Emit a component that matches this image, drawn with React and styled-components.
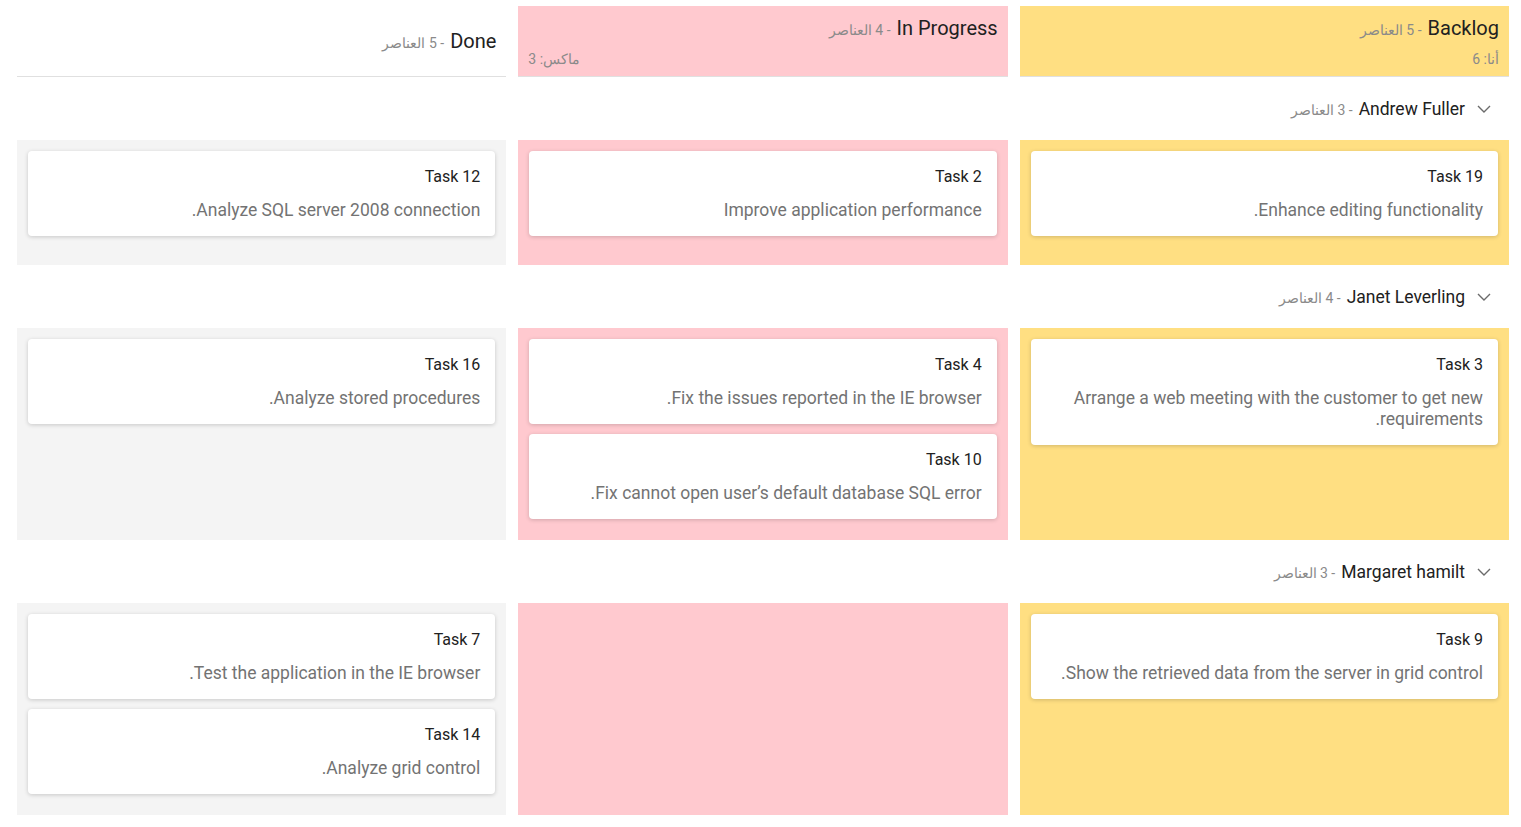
import React from 'react';
import styled, { createGlobalStyle } from 'styled-components';

const GlobalStyle = createGlobalStyle`
  body {
    margin: 0;
    background: #fff;
    font-family: Roboto, "Noto Sans", "Liberation Sans", sans-serif;
  }
`;

const columns = [
  { key: 'backlog', title: 'Backlog', count: 5, min: 'أنا: 6', max: '', bg: '#ffdf82' },
  { key: 'progress', title: 'In Progress', count: 4, min: '', max: 'ماكس: 3', bg: '#ffc9cf' },
  { key: 'done', title: 'Done', count: 5, min: '', max: '', bg: 'transparent' },
];

const cellBg = {
  backlog: '#ffdf82',
  progress: '#ffc9cf',
  done: '#f4f4f4',
};

const swimlanes = [
  {
    name: 'Andrew Fuller',
    count: 3,
    cells: {
      backlog: [{ id: 'Task 19', text: 'Enhance editing functionality.' }],
      progress: [{ id: 'Task 2', text: 'Improve application performance' }],
      done: [{ id: 'Task 12', text: 'Analyze SQL server 2008 connection.' }],
    },
  },
  {
    name: 'Janet Leverling',
    count: 4,
    cells: {
      backlog: [{ id: 'Task 3', text: 'Arrange a web meeting with the customer to get new requirements.' }],
      progress: [
        { id: 'Task 4', text: 'Fix the issues reported in the IE browser.' },
        { id: 'Task 10', text: 'Fix cannot open user’s default database SQL error.' },
      ],
      done: [{ id: 'Task 16', text: 'Analyze stored procedures.' }],
    },
  },
  {
    name: 'Margaret hamilt',
    count: 3,
    cells: {
      backlog: [{ id: 'Task 9', text: 'Show the retrieved data from the server in grid control.' }],
      progress: [],
      done: [
        { id: 'Task 7', text: 'Test the application in the IE browser.' },
        { id: 'Task 14', text: 'Analyze grid control.' },
      ],
    },
  },
];

const Board = styled.div`
  direction: rtl;
  padding: 6px 12px 12px 17px;
`;

const Row = styled.div`
  display: grid;
  grid-template-columns: repeat(3, 1fr);
  column-gap: 12px;
`;

const HeaderCell = styled.div`
  background: ${p => p.$bg};
  height: 70px;
  box-sizing: border-box;
  border-bottom: 1px solid #e0e0e0;
  padding: 2px 10px 0;
  display: flex;
  flex-direction: column;
  justify-content: center;
  gap: 7px;
  height: 71px;
`;

const HeaderTitleLine = styled.div`
  display: flex;
  align-items: baseline;
  gap: 6px;
  line-height: 24px;
`;

const HeaderTitle = styled.span`
  font-size: 20px;
  color: #212121;
`;

const Count = styled.span`
  font-size: 14px;
  color: #8a8a8a;
`;

const Limits = styled.div`
  display: flex;
  justify-content: space-between;
  font-size: 14px;
  line-height: 20px;
  color: #8a8a8a;
`;

const LaneHeader = styled.div`
  height: 63px;
  display: flex;
  align-items: center;
  gap: 12px;
  padding-right: 18px;
`;

const Chevron = styled.svg`
  width: 14px;
  height: 8px;
  flex: none;
`;

const LaneName = styled.span`
  font-size: 17.5px;
  color: #212121;
`;

const LaneTitle = styled.div`
  display: flex;
  align-items: baseline;
  gap: 6px;
`;

const Cell = styled.div`
  background: ${p => p.$bg};
  min-height: 125px;
  box-sizing: border-box;
  padding: 11px 11px 21px;
  display: flex;
  flex-direction: column;
  gap: 10px;
`;

const Card = styled.div`
  background: #fff;
  border-radius: 4px;
  box-shadow: 0 1px 4px rgba(0, 0, 0, 0.18);
  padding: 16px 15px 15px;
`;

const CardTitle = styled.div`
  font-size: 16px;
  line-height: 20px;
  color: #212121;
  margin-bottom: 13px;
`;

const CardText = styled.div`
  font-size: 17.5px;
  line-height: 21px;
  color: #737373;
`;

function ChevronDown() {
  return (
    <Chevron viewBox="0 0 14 8" fill="none">
      <polyline points="1,1 7,7 13,1" stroke="#6b6b6b" strokeWidth="1.4" />
    </Chevron>
  );
}

export default function App() {
  return (
    <>
      <GlobalStyle />
      <Board>
        <Row>
          {columns.map(col => (
            <HeaderCell key={col.key} $bg={col.bg}>
              <HeaderTitleLine>
                <HeaderTitle>{col.title}</HeaderTitle>
                <Count>- {col.count} العناصر</Count>
              </HeaderTitleLine>
              {(col.min || col.max) && (
                <Limits>
                  <span>{col.min}</span>
                  <span>{col.max}</span>
                </Limits>
              )}
            </HeaderCell>
          ))}
        </Row>
        {swimlanes.map(lane => (
          <div key={lane.name}>
            <LaneHeader>
              <ChevronDown />
              <LaneTitle>
                <LaneName>{lane.name}</LaneName>
                <Count>- {lane.count} العناصر</Count>
              </LaneTitle>
            </LaneHeader>
            <Row>
              {columns.map(col => (
                <Cell key={col.key} $bg={cellBg[col.key]}>
                  {lane.cells[col.key].map(card => (
                    <Card key={card.id}>
                      <CardTitle>{card.id}</CardTitle>
                      <CardText>{card.text}</CardText>
                    </Card>
                  ))}
                </Cell>
              ))}
            </Row>
          </div>
        ))}
      </Board>
    </>
  );
}
